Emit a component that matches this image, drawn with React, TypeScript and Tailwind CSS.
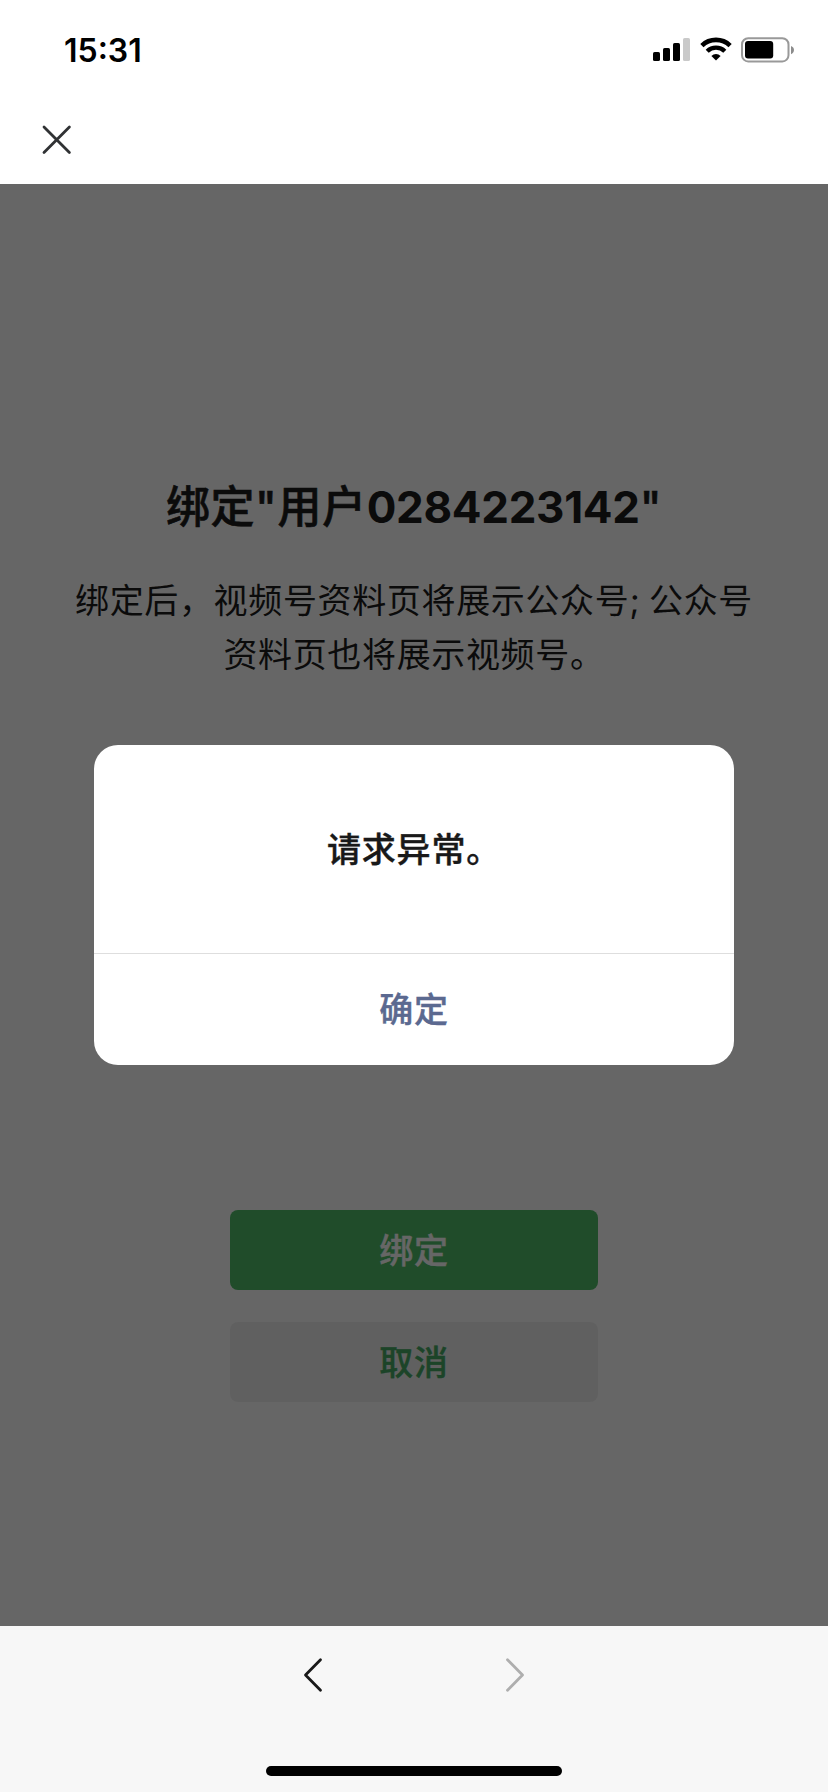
import { ReactNode } from "react";

function SignalIcon() {
  return (
    <svg width="37" height="24" viewBox="0 0 37 24">
      <rect x="0" y="14" width="7" height="9" rx="1.6" fill="#000" />
      <rect x="10" y="10" width="7" height="13" rx="1.6" fill="#000" />
      <rect x="20" y="5" width="7" height="18" rx="1.6" fill="#000" />
      <rect x="30" y="0" width="7" height="23" rx="1.6" fill="#c9c9c9" />
    </svg>
  );
}

function WifiIcon() {
  return (
    <svg width="32" height="24" viewBox="0 0 32 24" fill="none" stroke="#000">
      <path d="M1.9 8.6a20.2 20.2 0 0 1 28.2 0" strokeWidth="4.6" />
      <path d="M7.2 14.2a12.6 12.6 0 0 1 17.6 0" strokeWidth="4.4" />
      <path d="M16 23.5l-4.6-4.6a6.6 6.6 0 0 1 9.2 0z" fill="#000" stroke="none" />
    </svg>
  );
}

function BatteryIcon() {
  return (
    <svg width="54" height="26" viewBox="0 0 54 26">
      <rect x="1" y="1.2" width="46.5" height="23.2" rx="6.2" fill="none" stroke="#999" strokeWidth="2" />
      <rect x="4" y="4" width="28.2" height="17.4" rx="3" fill="#000" />
      <path d="M50 9v8.2c1.8-.6 3-2.2 3-4.1s-1.2-3.5-3-4.1z" fill="#8c8c8c" />
    </svg>
  );
}

function StatusBar() {
  return (
    <div className="flex h-24 items-start justify-between pl-16 pr-[33px]">
      <span className="mt-[30px] font-['Inter'] text-[32px] leading-[42px] font-semibold text-black">15:31</span>
      <div className="mt-[37px] flex items-start">
        <div className="mt-px w-[47px]"><SignalIcon /></div>
        <div className="w-[41px]"><WifiIcon /></div>
        <BatteryIcon />
      </div>
    </div>
  );
}

function PageButton({ className, children }: { className: string; children: ReactNode }) {
  return (
    <button
      className={`h-20 w-[368px] rounded-lg text-[34px] font-medium tracking-[0.8px] [-webkit-text-stroke:0.4px] ${className}`}
    >
      {children}
    </button>
  );
}

function BindPage() {
  return (
    <div className="flex h-full flex-col items-center bg-white text-[#1c1c1c]">
      <h1 className="mt-[291px] text-[44px] leading-[64px] font-medium tracking-[0.6px] whitespace-nowrap [-webkit-text-stroke:0.6px]">
        绑定"用户
        <span className="font-bold tracking-[-0.3px] [-webkit-text-stroke:0px]">0284223142</span>"
      </h1>
      <p className="mt-[35px] text-center text-[34px] leading-[54px] tracking-[0.65px] [word-spacing:-1.5px] whitespace-nowrap">
        绑定后，视频号资料页将展示公众号; 公众号
        <br />
        资料页也将展示视频号。
      </p>
      <div className="mt-[528px] flex flex-col gap-8">
        <PageButton className="bg-[#50be69] text-white">绑定</PageButton>
        <PageButton className="bg-[#f1f1f1] text-[#46aa64]">取消</PageButton>
      </div>
    </div>
  );
}

function AlertDialog() {
  return (
    <div role="alertdialog" className="flex h-80 w-[640px] flex-col overflow-hidden rounded-3xl bg-white">
      <p className="flex flex-1 items-center justify-center text-[34px] font-medium tracking-[0.8px] text-[#191919] [-webkit-text-stroke:0.4px]">
        请求异常。
      </p>
      <button className="h-28 border-t border-[#dedede] text-[34px] font-medium tracking-[0.8px] text-[#5b6990] [-webkit-text-stroke:0.4px]">
        确定
      </button>
    </div>
  );
}

export default function App() {
  return (
    <div className="flex h-[1792px] w-[828px] flex-col overflow-hidden bg-white font-['Inter','Noto_Sans_CJK_SC',sans-serif]">
      <header className="h-[184px]">
        <StatusBar />
        <button aria-label="关闭" className="mt-[28px] ml-[41px] block">
          <svg width="31" height="31" viewBox="0 0 31 31" fill="none" stroke="#303234" strokeWidth="2.8" strokeLinecap="round">
            <path d="M3 3l25.4 25.4M28.4 3L3 28.4" />
          </svg>
        </button>
      </header>

      <main className="relative h-[1442px]">
        <BindPage />
        <div className="absolute inset-0 flex items-center justify-center bg-black/60">
          <AlertDialog />
        </div>
      </main>

      <footer className="flex h-[166px] flex-col items-center justify-between bg-[#f7f7f7] pt-[31px] pb-4">
        <div className="flex w-[222px] justify-between">
          <svg width="20" height="36" viewBox="0 0 20 36" fill="none" stroke="#191919" strokeWidth="2.8" strokeLinecap="round" strokeLinejoin="round">
            <path d="M17.5 2.8L2.5 18l15 15.2" />
          </svg>
          <svg width="20" height="36" viewBox="0 0 20 36" fill="none" stroke="#aeaeae" strokeWidth="2.8" strokeLinecap="round" strokeLinejoin="round">
            <path d="M2.5 2.8L17.5 18l-15 15.2" />
          </svg>
        </div>
        <div className="h-2.5 w-[296px] rounded-full bg-black" />
      </footer>
    </div>
  );
}
